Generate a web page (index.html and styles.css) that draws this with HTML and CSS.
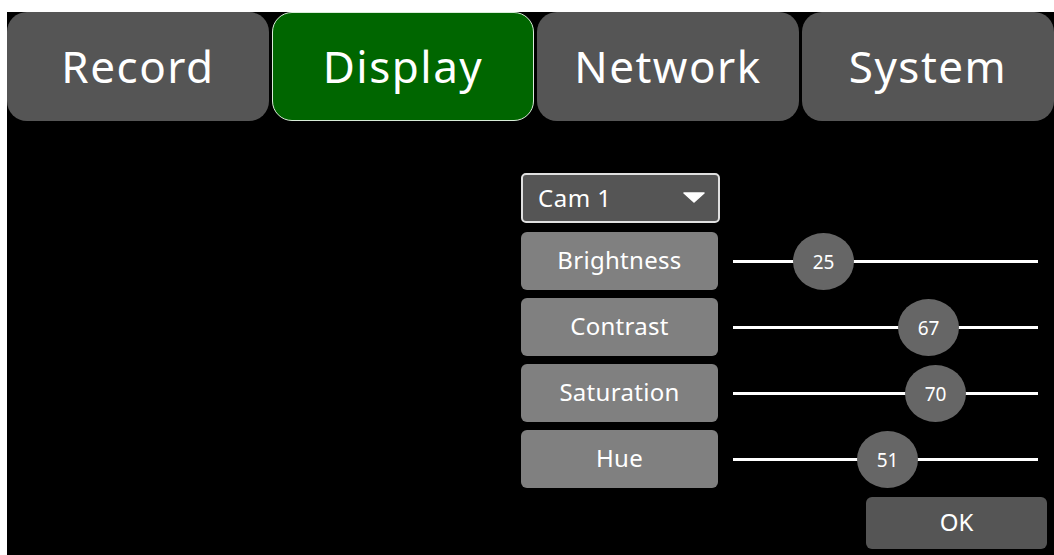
FILE: index.html
```html
<!DOCTYPE html>
<html lang="en">
<head>
  <meta charset="UTF-8">
  <title>Display Settings</title>
  <link rel="stylesheet" href="styles.css">
</head>
<body>

<div class="screen">
  <div class="tabs">
    <div class="tab">Record</div>
    <div class="tab active">Display</div>
    <div class="tab">Network</div>
    <div class="tab">System</div>
  </div>

  <div class="panel">
    <div class="select">
      <span>Cam 1</span>
      <svg class="arrow" width="22" height="11" viewBox="0 0 22 11"><path d="M1 1 L21 1 L11 10 Z" fill="#fff" stroke="#fff" stroke-width="1.5" stroke-linejoin="round"/></svg>
    </div>

    <div class="row">
      <div class="label">Brightness</div>
      <div class="slider"><div class="track"></div><div class="knob" style="left: 60px">25</div></div>
    </div>
    <div class="row">
      <div class="label">Contrast</div>
      <div class="slider"><div class="track"></div><div class="knob" style="left: 165px">67</div></div>
    </div>
    <div class="row">
      <div class="label">Saturation</div>
      <div class="slider"><div class="track"></div><div class="knob" style="left: 172px">70</div></div>
    </div>
    <div class="row">
      <div class="label">Hue</div>
      <div class="slider"><div class="track"></div><div class="knob" style="left: 124px">51</div></div>
    </div>

    <div class="actions">
      <div class="ok">OK</div>
    </div>
  </div>
</div>

</body>
</html>
```

FILE: styles.css
```css
body {
  margin: 0;
  background: #fff;
  font-family: 'Noto Sans', 'Open Sans', sans-serif;
  color: #fff;
  overflow: hidden;
}

.screen {
  margin: 12px 0 0 7px;
  width: 1047px;
  height: 543px;
  background: #000;
  overflow: hidden;
}

.tabs {
  display: flex;
  gap: 3px;
  height: 109px;
}

.tab {
  flex: none;
  width: 262px;
  background: #555;
  border-radius: 20px;
  display: flex;
  align-items: center;
  justify-content: center;
  font-size: 44px;
  letter-spacing: 1.5px;
  box-sizing: border-box;
  padding-bottom: 2px;
}

.tab:last-child {
  width: 252px;
}

.tab.active {
  background: #006600;
  border: 1.5px solid #d8ecd8;
}

.panel {
  margin: 52px 0 0 514px;
  width: 526px;
  display: flex;
  flex-direction: column;
  gap: 8px;
}

.select {
  width: 199px;
  height: 50px;
  box-sizing: border-box;
  border: 2px solid #e0e0e0;
  border-radius: 5px;
  background: #555;
  display: flex;
  align-items: center;
  justify-content: space-between;
  padding: 0 13px 2px 15px;
  font-size: 24px;
  letter-spacing: 0.5px;
  margin-bottom: 1px;
}

.row {
  display: flex;
  align-items: center;
  height: 58px;
}

.label {
  width: 197px;
  height: 58px;
  box-sizing: border-box;
  padding-bottom: 3px;
  background: #808080;
  border-radius: 6px;
  display: flex;
  align-items: center;
  justify-content: center;
  font-size: 24px;
  letter-spacing: 0.3px;
}

.slider {
  position: relative;
  margin-left: 15px;
  width: 305px;
  height: 58px;
  display: flex;
  align-items: center;
}

.track {
  width: 100%;
  height: 3px;
  background: #fff;
}

.knob {
  position: absolute;
  top: 1px;
  width: 61px;
  height: 57px;
  border-radius: 50%;
  background: #666;
  display: flex;
  align-items: center;
  justify-content: center;
  font-size: 19px;
}

.actions {
  display: flex;
  justify-content: flex-end;
  margin-top: 1px;
}

.ok {
  width: 181px;
  height: 52px;
  box-sizing: border-box;
  padding-bottom: 3px;
  background: #555;
  border-radius: 6px;
  display: flex;
  align-items: center;
  justify-content: center;
  font-size: 24px;
}
```
